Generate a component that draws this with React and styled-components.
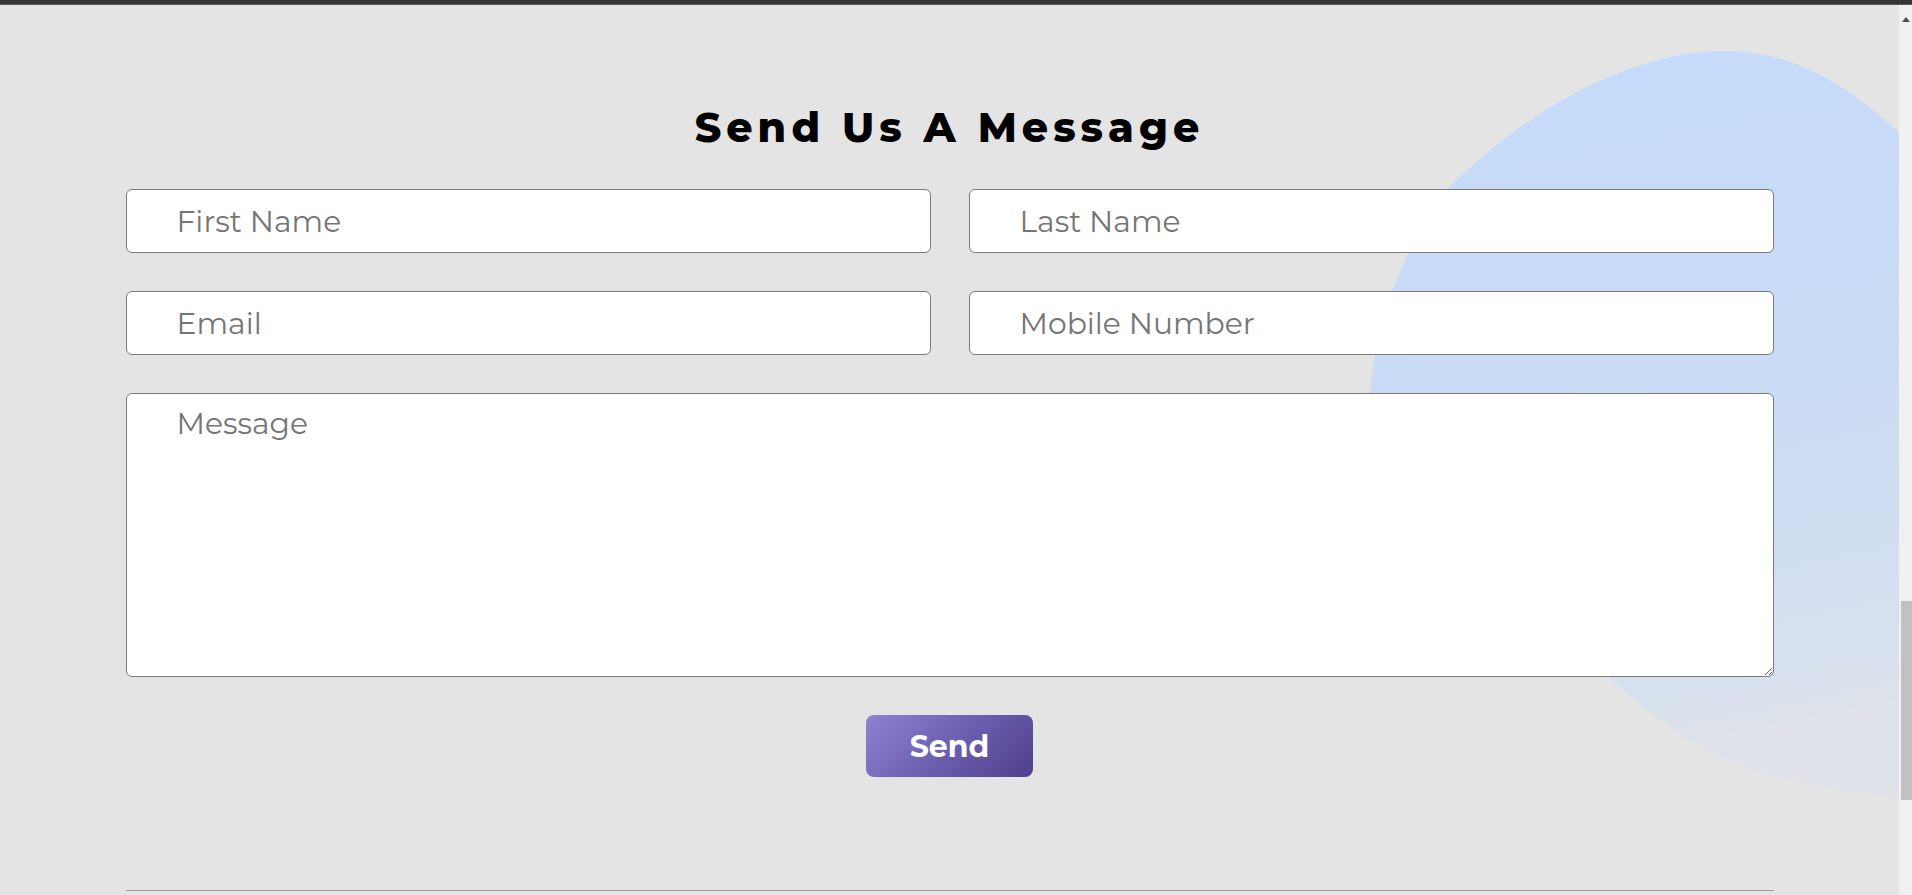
import React from 'react'
import styled, { createGlobalStyle } from 'styled-components'

const GlobalStyle = createGlobalStyle`
  html, body {
    margin: 0;
    padding: 0;
    height: 100%;
    overflow: hidden;
  }
  body {
    font-family: Montserrat, "DejaVu Sans", sans-serif;
    background: #e4e4e4;
  }
  * {
    box-sizing: border-box;
  }
`

const Page = styled.div`
  display: flex;
  flex-direction: column;
  height: 100vh;
`

const TopBar = styled.div`
  height: 5px;
  background: #353535;
  border-bottom: 1px solid #5c5c5c;
  flex-shrink: 0;
`

const Body = styled.div`
  display: flex;
  flex: 1;
  min-height: 0;
`

const Main = styled.main`
  position: relative;
  flex: 1;
  overflow: hidden;
  background: #e4e4e4;
`

const Blob = styled.svg`
  position: absolute;
  top: 0;
  left: 0;
  width: 100%;
  height: 100%;
  z-index: 0;
`

const Section = styled.section`
  position: relative;
  z-index: 1;
  width: 1648px;
  margin: 0 auto;
  padding-top: 97px;
`

const Heading = styled.h2`
  margin: 0 0 37px;
  text-align: center;
  font-family: Montserrat, "DejaVu Sans", sans-serif;
  font-weight: 800;
  font-size: 41px;
  letter-spacing: 5px;
  color: #000;
`

const Form = styled.form`
  display: grid;
  grid-template-columns: 1fr 1fr;
  column-gap: 38px;
  row-gap: 38px;
`

const Field = styled.input`
  height: 64px;
  padding: 0 50px;
  border: 1px solid #7a7a7a;
  border-radius: 6px;
  background: #fff;
  font-family: Montserrat, "DejaVu Sans", sans-serif;
  font-size: 29.8px;
  color: #333;
  outline: none;

  &::placeholder {
    color: #757575;
  }
`

const MessageArea = styled.textarea`
  grid-column: 1 / -1;
  height: 284px;
  padding: 11px 50px;
  border: 1px solid #7a7a7a;
  border-radius: 6px;
  background: #fff;
  font-family: Montserrat, "DejaVu Sans", sans-serif;
  font-size: 29.8px;
  color: #333;
  outline: none;

  &::placeholder {
    color: #757575;
  }
`

const ButtonRow = styled.div`
  display: flex;
  justify-content: center;
  margin-top: 38px;
`

const SendButton = styled.button`
  width: 167px;
  height: 62px;
  border: none;
  border-radius: 8px;
  background: linear-gradient(135deg, #8e82d2 0%, #6d5fb0 50%, #4f3f8d 100%);
  color: #fff;
  font-family: Montserrat, "DejaVu Sans", sans-serif;
  font-weight: 700;
  font-size: 30px;
  cursor: pointer;
`

const Divider = styled.hr`
  margin: 113px 0 0;
  border: none;
  border-top: 1px solid #9c9c9c;
`

const ScrollTrack = styled.div`
  width: 13px;
  flex-shrink: 0;
  display: flex;
  flex-direction: column;
  align-items: center;
  background: #f1f1f1;
`

const ArrowUp = styled.div`
  height: 17px;
  display: flex;
  align-items: flex-end;
  justify-content: center;

  &::before {
    content: '';
    border-left: 4px solid transparent;
    border-right: 4px solid transparent;
    border-bottom: 5px solid #505050;
  }
`

const Thumb = styled.div`
  margin-top: ${(props) => props.offset}px;
  width: 11px;
  height: ${(props) => props.size}px;
  background: #c1c1c1;
  margin-left: 2px;
`

const fields = [
  { name: 'firstName', placeholder: 'First Name', type: 'text' },
  { name: 'lastName', placeholder: 'Last Name', type: 'text' },
  { name: 'email', placeholder: 'Email', type: 'email' },
  { name: 'mobile', placeholder: 'Mobile Number', type: 'tel' },
]

const App = () => {
  return (
    <Page>
      <GlobalStyle />
      <TopBar />
      <Body>
        <Main>
          <Blob viewBox="0 6 1899 889" preserveAspectRatio="none">
            <defs>
              <linearGradient id="blobFill" x1="0" y1="0" x2="0.15" y2="1">
                <stop offset="0%" stopColor="#c5dbfb" />
                <stop offset="60%" stopColor="#cbdcf4" />
                <stop offset="90%" stopColor="#d6e0ef" />
                <stop offset="100%" stopColor="#dfe2e8" />
              </linearGradient>
            </defs>
            <path
              fill="url(#blobFill)"
              d="M1368 420 C1372 330 1400 250 1450 187 C1540 100 1640 52 1723 52 C1800 52 1860 90 1930 165 L1930 803 C1840 792 1780 780 1744 767 C1700 752 1650 715 1608 677 C1480 560 1368 500 1368 420 Z"
            />
          </Blob>
          <Section>
            <Heading>Send Us A Message</Heading>
            <Form onSubmit={(e) => e.preventDefault()}>
              {fields.map((item) => (
                <Field key={item.name} name={item.name} type={item.type} placeholder={item.placeholder} />
              ))}
              <MessageArea name="message" placeholder="Message" />
            </Form>
            <ButtonRow>
              <SendButton type="button">Send</SendButton>
            </ButtonRow>
            <Divider />
          </Section>
        </Main>
        <ScrollTrack>
          <ArrowUp />
          <Thumb offset={579} size={199} />
        </ScrollTrack>
      </Body>
    </Page>
  )
}

export default App
